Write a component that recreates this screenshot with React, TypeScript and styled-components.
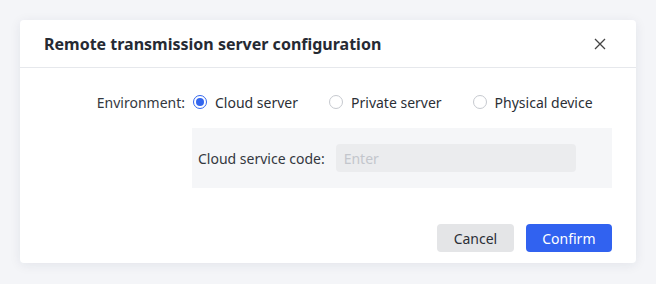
import React from "react";
import styled, { createGlobalStyle } from "styled-components";

const Global = createGlobalStyle`
  html, body { margin: 0; padding: 0; background: #f4f5f8; }
  body { font-family: "Noto Sans", "Open Sans", sans-serif; }
  * { box-sizing: border-box; }
`;

const Page = styled.div`
  width: 656px;
  height: 284px;
  padding: 20px;
  background: #f4f5f8;
`;

const Dialog = styled.div`
  width: 616px;
  height: 243px;
  background: #fff;
  border-radius: 4px;
  box-shadow: 0 2px 12px rgba(30, 40, 80, 0.08);
  display: flex;
  flex-direction: column;
`;

const Header = styled.div`
  height: 48px;
  padding: 0 26px 0 24px;
  display: flex;
  align-items: center;
  justify-content: space-between;
  border-bottom: 1px solid #e6e8ec;
`;

const Title = styled.h2`
  margin: 0;
  font-size: 16px;
  font-weight: 700;
  color: #262a33;
`;

const Close = styled.button`
  width: 20px;
  height: 20px;
  padding: 0;
  border: none;
  background: none;
  display: flex;
  align-items: center;
  justify-content: center;
  color: #444;
`;

const Body = styled.div`
  flex: 1;
  padding: 21px 24px 0 0;
  display: flex;
  flex-direction: column;
`;

const FieldRow = styled.div`
  display: flex;
  align-items: center;
  height: 26px;
`;

const Label = styled.span`
  width: 165px;
  text-align: right;
  font-size: 14px;
  color: #333840;
  margin-right: 8px;
`;

const RadioGroup = styled.div`
  display: flex;
  align-items: center;
  gap: 31px;
`;

const RadioItem = styled.label`
  display: flex;
  align-items: center;
  gap: 8px;
  font-size: 14px;
  color: #2b2f36;
`;

const RadioDot = styled.span<{ $checked?: boolean }>`
  width: 14px;
  height: 14px;
  border-radius: 50%;
  border: 1px solid ${(p) => (p.$checked ? "#3366ee" : "#c6c9cf")};
  display: flex;
  align-items: center;
  justify-content: center;
  &::after {
    content: "";
    width: 8px;
    height: 8px;
    border-radius: 50%;
    background: ${(p) => (p.$checked ? "#3366ee" : "transparent")};
  }
`;

const SubPanel = styled.div`
  margin: 13px 0 0 172px;
  height: 60px;
  background: #f5f6f8;
  display: flex;
  align-items: center;
  padding: 0 6px;
`;

const SubLabel = styled.span`
  font-size: 14px;
  color: #333840;
  margin-right: 11px;
`;

const Input = styled.input`
  width: 240px;
  height: 28px;
  border: none;
  border-radius: 4px;
  background: #ebecee;
  padding: 0 8px;
  font-size: 14px;
  font-family: inherit;
  &::placeholder { color: #c3c6cc; }
`;

const Footer = styled.div`
  display: flex;
  justify-content: flex-end;
  gap: 12px;
  padding: 0 24px 11px 0;
`;

const Button = styled.button<{ $primary?: boolean }>`
  height: 28px;
  padding: 0 16.5px;
  border: none;
  border-radius: 4px;
  font-family: inherit;
  font-size: 14px;
  background: ${(p) => (p.$primary ? "#3162f0" : "#e4e5e7")};
  color: ${(p) => (p.$primary ? "#fff" : "#2b2f36")};
`;

export default function App() {
  return (
    <Page>
      <Global />
      <Dialog>
        <Header>
          <Title>Remote transmission server configuration</Title>
          <Close aria-label="close">
            <svg width="12" height="12" viewBox="0 0 12 12">
              <path d="M1 1L11 11M11 1L1 11" stroke="currentColor" strokeWidth="1.3" />
            </svg>
          </Close>
        </Header>
        <Body>
          <FieldRow>
            <Label>Environment:</Label>
            <RadioGroup>
              <RadioItem><RadioDot $checked />Cloud server</RadioItem>
              <RadioItem><RadioDot />Private server</RadioItem>
              <RadioItem><RadioDot />Physical device</RadioItem>
            </RadioGroup>
          </FieldRow>
          <SubPanel>
            <SubLabel>Cloud service code:</SubLabel>
            <Input placeholder="Enter" />
          </SubPanel>
        </Body>
        <Footer>
          <Button>Cancel</Button>
          <Button $primary>Confirm</Button>
        </Footer>
      </Dialog>
    </Page>
  );
}
